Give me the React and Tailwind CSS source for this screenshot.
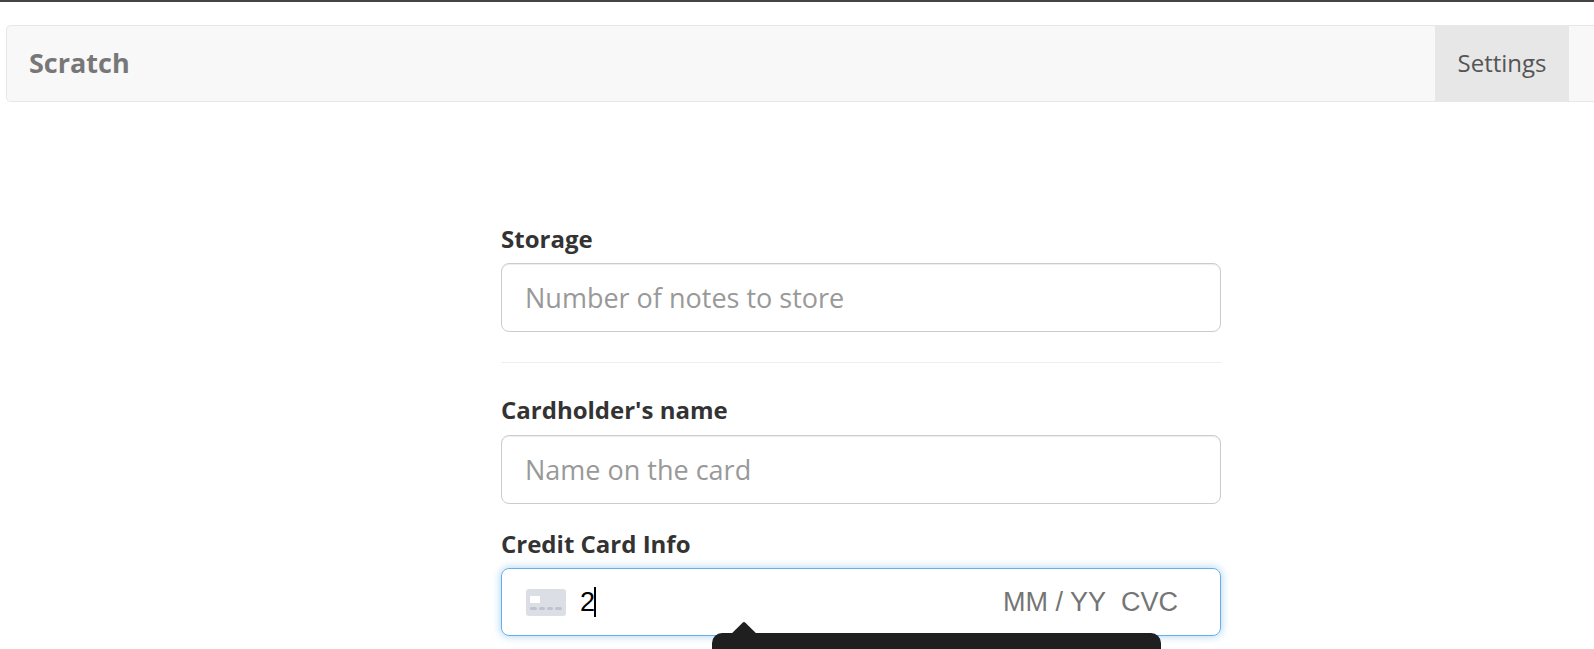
import React from "react";

const CardIcon = () => (
  <svg width="40" height="27" viewBox="0 0 40 27" className="shrink-0">
    <rect width="40" height="27" rx="3" fill="#dcdee6" />
    <rect x="4" y="7" width="10" height="7" rx="1" fill="#ffffff" />
    <rect x="4" y="18" width="7" height="3" rx="1.5" fill="#bfc2cf" />
    <rect x="13" y="18" width="6" height="3" rx="1.5" fill="#bfc2cf" />
    <rect x="21" y="18" width="6" height="3" rx="1.5" fill="#bfc2cf" />
    <rect x="29" y="18" width="7" height="3" rx="1.5" fill="#bfc2cf" />
  </svg>
);

const App = () => {
  return (
    <div className="h-[649px] overflow-hidden bg-white font-['Open_Sans',sans-serif]">
      <div className="h-[2px] bg-[#444444]"></div>
      <div className="pl-[6px] pt-[23px]">
        <div className="flex h-[77px] items-center justify-between rounded-l-[5px] border border-r-0 border-[#e7e7e7] bg-[#f8f8f8]">
          <a className="pl-[22px] text-[27px] font-bold text-[#777777]">Scratch</a>
          <div className="mr-[25px] flex h-full w-[134px] items-center justify-center bg-[#e7e7e7] pb-[2px] text-[24px] text-[#555555]">
            Settings
          </div>
        </div>
      </div>

      <div className="mx-auto mt-[122px] w-[720px] translate-x-[64px]">
        <label className="block text-[24px] leading-[30px] font-bold text-[#333333]">Storage</label>
        <input
          className="mt-[9px] block h-[69px] w-full rounded-[8px] border border-[#cccccc] px-[23px] text-[27px] shadow-[inset_0_1px_1px_rgba(0,0,0,0.075)] outline-none placeholder:text-[#999999]"
          placeholder="Number of notes to store"
        />
        <hr className="mt-[30px] border-t border-[#eeeeee]" />
        <label className="mt-[32px] block text-[24px] leading-[30px] font-bold text-[#333333]">Cardholder's name</label>
        <input
          className="mt-[10px] block h-[69px] w-full rounded-[8px] border border-[#cccccc] px-[23px] text-[27px] shadow-[inset_0_1px_1px_rgba(0,0,0,0.075)] outline-none placeholder:text-[#999999]"
          placeholder="Name on the card"
        />
        <label className="mt-[25px] block text-[24px] leading-[30px] font-bold text-[#333333]">Credit Card Info</label>
        <div className="relative mt-[9px] flex h-[68px] items-center rounded-[8px] border border-[#66afe9] pl-[24px] pr-[42px] font-['Liberation_Sans',sans-serif] text-[27px] shadow-[0_0_8px_rgba(102,175,233,0.6)]">
          <CardIcon />
          <span className="ml-[14px] text-black">2</span>
          <span className="ml-[-1px] h-[30px] w-[1.5px] bg-black"></span>
          <span className="ml-auto text-[#757575]">MM / YY</span>
          <span className="ml-[15px] text-[#757575]">CVC</span>
          <div className="absolute left-[233px] top-[56px] h-[18px] w-[18px] rotate-45 rounded-[2px] bg-[#1f1f1f]"></div>
          <div className="absolute left-[210px] top-[64px] h-[24px] w-[449px] rounded-t-[10px] bg-[#1f1f1f]"></div>
        </div>
      </div>
    </div>
  );
};

export default App;
